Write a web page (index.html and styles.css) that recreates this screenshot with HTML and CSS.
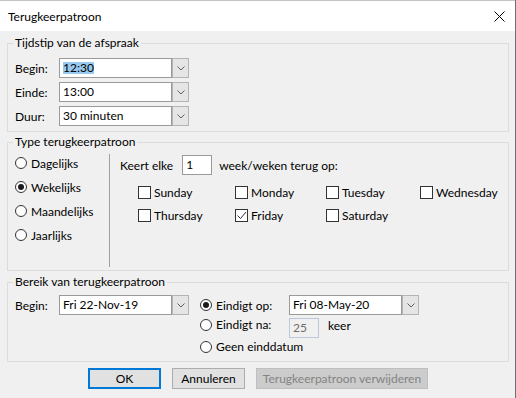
FILE: index.html
```html
<!DOCTYPE html>
<html lang="nl">
<head>
    <title>Terugkeerpatroon</title>
    <link rel="stylesheet" href="styles.css">
</head>
<body>
    <div class="window">
        <div class="titlebar">
            <span class="title">Terugkeerpatroon</span>
            <svg class="close" width="11" height="11" viewBox="0 0 11 11"><path d="M0.5 0.5 L10.5 10.5 M10.5 0.5 L0.5 10.5" stroke="#000" stroke-width="1"/></svg>
        </div>
        <div class="content">
            <fieldset class="group group-time">
                <legend>Tijdstip van de afspraak</legend>
                <div class="field-row">
                    <label class="field-label">Begin:</label>
                    <div class="combo">
                        <span class="combo-text"><span class="selected">12:30</span></span>
                        <span class="combo-btn"><svg width="8" height="5" viewBox="0 0 8 5"><polyline points="0.5,0.5 4,4 7.5,0.5" fill="none" stroke="#606060"/></svg></span>
                    </div>
                </div>
                <div class="field-row">
                    <label class="field-label">Einde:</label>
                    <div class="combo">
                        <span class="combo-text">13:00</span>
                        <span class="combo-btn"><svg width="8" height="5" viewBox="0 0 8 5"><polyline points="0.5,0.5 4,4 7.5,0.5" fill="none" stroke="#606060"/></svg></span>
                    </div>
                </div>
                <div class="field-row">
                    <label class="field-label">Duur:</label>
                    <div class="combo">
                        <span class="combo-text">30 minuten</span>
                        <span class="combo-btn"><svg width="8" height="5" viewBox="0 0 8 5"><polyline points="0.5,0.5 4,4 7.5,0.5" fill="none" stroke="#606060"/></svg></span>
                    </div>
                </div>
            </fieldset>

            <fieldset class="group group-pattern">
                <legend>Type terugkeerpatroon</legend>
                <div class="pattern">
                    <div class="freq">
                        <div class="option"><span class="radio"></span>Dagelijks</div>
                        <div class="option"><span class="radio checked"></span>Wekelijks</div>
                        <div class="option"><span class="radio"></span>Maandelijks</div>
                        <div class="option"><span class="radio"></span>Jaarlijks</div>
                    </div>
                    <div class="weekly">
                        <div class="every-row">
                            <span>Keert elke</span>
                            <span class="textbox small">1</span>
                            <span>week/weken terug op:</span>
                        </div>
                        <div class="days">
                            <div class="option"><span class="check"></span>Sunday</div>
                            <div class="option"><span class="check"></span>Monday</div>
                            <div class="option"><span class="check"></span>Tuesday</div>
                            <div class="option"><span class="check"></span>Wednesday</div>
                            <div class="option"><span class="check"></span>Thursday</div>
                            <div class="option"><span class="check"><svg width="11" height="11" viewBox="0 0 11 11"><polyline points="1.5,5.5 4.5,8.5 10,2" fill="none" stroke="#333" stroke-width="1"/></svg></span>Friday</div>
                            <div class="option"><span class="check"></span>Saturday</div>
                        </div>
                    </div>
                </div>
            </fieldset>

            <fieldset class="group group-range">
                <legend>Bereik van terugkeerpatroon</legend>
                <div class="range">
                    <div class="field-row">
                        <label class="field-label">Begin:</label>
                        <div class="combo">
                            <span class="combo-text">Fri 22-Nov-19</span>
                            <span class="combo-btn"><svg width="8" height="5" viewBox="0 0 8 5"><polyline points="0.5,0.5 4,4 7.5,0.5" fill="none" stroke="#606060"/></svg></span>
                        </div>
                    </div>
                    <div class="ends">
                        <div class="end-row">
                            <div class="option end-option"><span class="radio checked"></span>Eindigt op:</div>
                            <div class="combo">
                                <span class="combo-text">Fri 08-May-20</span>
                                <span class="combo-btn"><svg width="8" height="5" viewBox="0 0 8 5"><polyline points="0.5,0.5 4,4 7.5,0.5" fill="none" stroke="#606060"/></svg></span>
                            </div>
                        </div>
                        <div class="end-row after">
                            <div class="option end-option"><span class="radio"></span>Eindigt na:</div>
                            <span class="textbox small disabled">25</span>
                            <span class="keer">keer</span>
                        </div>
                        <div class="option"><span class="radio"></span>Geen einddatum</div>
                    </div>
                </div>
            </fieldset>

            <div class="buttons">
                <button class="btn default">OK</button>
                <button class="btn">Annuleren</button>
                <button class="btn wide" disabled>Terugkeerpatroon verwijderen</button>
            </div>
        </div>
    </div>
</body>
</html>
```

FILE: styles.css
```css
body {
    margin: 0;
    font-family: Lato, "Noto Sans", sans-serif;
    font-size: 12px;
    color: #000;
    background: #f0f0f0;
}
.window {
    width: 515px;
    height: 398px;
    border-right: 1px solid #6f6f6f;
    background: #f0f0f0;
}
.titlebar {
    height: 31px;
    background: #fff;
    display: flex;
    align-items: center;
    justify-content: space-between;
    padding: 0 10px 0 8px;
    box-sizing: border-box;
    border-top: 1px solid #c4c4c4;
}
.title {
    font-size: 12px;
}
.close {
    display: block;
}
.content {
    padding: 4px 6px 0 7px;
}
.group {
    margin: 0;
    border: 1px solid #dcdcdc;
    padding: 0 7px;
    min-width: 0;
}
.group legend {
    padding: 0 2px;
    margin-left: -2px;
    line-height: 16px;
}
.group-time {
    padding-top: 7px;
    padding-bottom: 5px;
}
.group-pattern {
    margin-top: 2px;
    padding-top: 1px;
    padding-bottom: 3px;
}
.group-range {
    margin-top: 3px;
    padding-top: 5px;
    padding-bottom: 6px;
}
.field-row {
    display: flex;
    align-items: center;
    height: 20px;
}
.field-row + .field-row {
    margin-top: 4px;
}
.field-label {
    width: 44px;
}
.combo {
    display: flex;
    height: 20px;
}
.combo-text {
    width: 113px;
    box-sizing: border-box;
    border: 1px solid #9a9a9a;
    background: #fff;
    padding: 0 3px;
    line-height: 18px;
}
.selected {
    background: #99c9ef;
    display: inline-block;
    line-height: 12px;
}
.combo-btn {
    width: 17px;
    box-sizing: border-box;
    border: 1px solid #b4b4b4;
    background: #e5e5e5;
    display: flex;
    align-items: center;
    justify-content: center;
}
.option {
    display: flex;
    align-items: center;
    white-space: nowrap;
}
.radio {
    width: 12px;
    height: 12px;
    box-sizing: border-box;
    border: 1px solid #333;
    border-radius: 50%;
    background: #fff;
    margin-right: 4px;
    display: flex;
    align-items: center;
    justify-content: center;
    flex: none;
}
.radio.checked::after {
    content: "";
    width: 6px;
    height: 6px;
    border-radius: 50%;
    background: #1a1a1a;
}
.check {
    width: 13px;
    height: 13px;
    box-sizing: border-box;
    border: 1px solid #333;
    background: #fff;
    margin-right: 3px;
    display: flex;
    flex: none;
}
.pattern {
    display: flex;
    height: 116px;
}
.freq {
    width: 94px;
    display: grid;
    grid-auto-rows: 24px;
    align-content: start;
}
.weekly {
    border-left: 1px solid #a0a0a0;
    margin-top: 3px;
    padding: 1px 0 0 10px;
    flex: 1;
}
.every-row {
    display: flex;
    align-items: center;
    height: 20px;
}
.textbox {
    height: 20px;
    box-sizing: border-box;
    border: 1px solid #9a9a9a;
    background: #fff;
    padding: 0 3px;
    line-height: 18px;
}
.textbox.small {
    width: 30px;
    margin: 0 7px 0 9px;
}
.textbox.disabled {
    border-color: #b9c9d9;
    background: #f0f0f0;
    color: #6d6d6d;
    margin: 0;
}
.days {
    display: grid;
    grid-template-columns: 97px 91px 94px auto;
    grid-auto-rows: 23px;
    margin: 6px 0 0 18px;
}
.range {
    display: flex;
    align-items: flex-start;
}
.ends {
    margin-left: 11px;
}
.end-row {
    display: flex;
    align-items: center;
    height: 20px;
}
.end-row.after {
    margin-top: 3px;
    align-items: flex-start;
}
.end-option {
    width: 89px;
}
.end-row.after .end-option {
    line-height: 14px;
}
.keer {
    margin-left: 9px;
    line-height: 16px;
}
.ends > .option {
    margin-top: 1px;
    line-height: 16px;
}
.buttons {
    display: flex;
    justify-content: center;
    gap: 11px;
    margin-top: 6px;
}
.btn {
    width: 73px;
    height: 21px;
    font-family: inherit;
    font-size: 12px;
    background: #e1e1e1;
    border: 1px solid #adadad;
    padding: 0;
    color: #000;
}
.btn.default {
    border: 2px solid #0078d7;
}
.btn.wide {
    width: 172px;
}
.btn:disabled {
    background: #cccccc;
    border-color: #bfbfbf;
    color: #838383;
}
```
